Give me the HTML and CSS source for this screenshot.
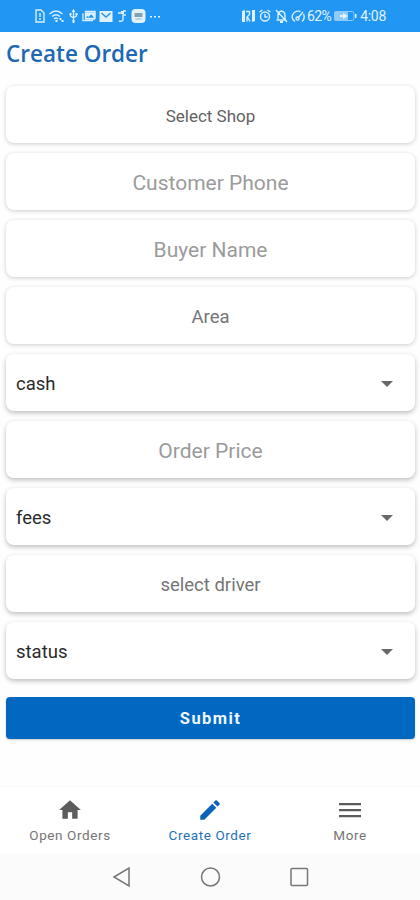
FILE: index.html
```
<!DOCTYPE html>
<html lang="en">
<head>
    <meta charset="UTF-8">
    <meta name="viewport" content="width=device-width, initial-scale=1.0">
    <title>Create Order</title>
    <link rel="stylesheet" href="styles.css">
</head>
<body>
    <div class="status-bar">
        <div class="status-left">
            <svg width="10" height="14" viewBox="0 0 10 14"><path d="M1 1h5l3 3v9H1z"/><path d="M5 4v4M5 9v2"/></svg>
            <svg width="17" height="14" viewBox="0 0 16 14"><path d="M1 5q6.500-6 13 0M3.500 7.500q4-3.500 8 0M5.500 10q2-2 4 0"/><path class="solid" d="M7 11h2v2H7zM11 9h2v2h-2zM13 11h2v2h-2z"/></svg>
            <svg width="11" height="14" viewBox="0 0 10 14"><path d="M5 2v10M2 5v2l3 2 3-2V5"/><path class="solid" d="M5 0l2 3H3zM1 4h2v2H1zM7 4h2v2H7zM4 11h2v3H4z"/></svg>
            <svg width="14" height="14" viewBox="0 0 15 14"><path d="M3 2h11v8M1 4v8h11"/><path class="solid" fill-rule="evenodd" d="M3 3h11v8H3zM4 9h9l-3-4-3 3-1-1z"/></svg>
            <svg width="14" height="14" viewBox="0 0 13 14"><path class="solid" d="M0 2h13v11H0z"/><path class="mail-fold" d="M2 4l4.500 4L11 4"/></svg>
            <svg width="12" height="14" viewBox="0 0 10 14"><path d="M1 4h4M6 2h3M6 3v8q-1 2-4 1M6 6h3"/><path class="solid" d="M4 2h3v3H4z"/></svg>
            <svg width="15" height="14" viewBox="0 0 14 14"><rect class="solid" width="14" height="14" rx="4"/><path class="app-mark" d="M3 5h8M3 7h8"/><path class="app-line" d="M4 10h6"/></svg>
            <svg width="12" height="14" viewBox="0 0 12 14"><path class="solid" d="M1 7h2v1.500H1zM5 7h2v1.500H5zM9 7h2v1.500H9z"/></svg>
        </div>
        <div class="status-right">
            <svg width="13" height="14" viewBox="0 0 13 14"><path class="solid" d="M0 2l3-1v12H0zM10 1h3v11l-3 1z"/><path d="M4 2.500h3.500v3L5 8v4.500M5.500 8L8 12.500"/></svg>
            <svg width="14" height="14" viewBox="0 0 13 14"><circle cx="6.500" cy="7.500" r="4.500"/><path d="M1 3l3-2M12 3L9 1M6.500 5v3h2.500"/></svg>
            <svg width="13" height="14" viewBox="0 0 13 14"><path d="M3 10V6q0-3 3.500-4Q10 3 10 6v4M1.500 11h10M1 1l11 12"/><path class="solid" d="M5 12h3v2H5z"/></svg>
            <svg width="15" height="14" viewBox="0 0 15 14"><path d="M4 12.500Q0 10 1.500 6 4 1 9.500 2.500M12.500 5q2 4.500-1.500 7.500M7 9l5-6"/><circle cx="6.500" cy="9.500" r="1.500"/></svg>
            <span class="battery-text">62%</span>
            <svg width="23" height="12" viewBox="0 0 23 12"><rect class="battery-fill" x="0" y="1" width="14" height="10" rx="2"/><rect class="battery-case" x="1" y="1.500" width="19" height="9" rx="2"/><path class="solid" d="M21 4h1.500v4H21zM6 5h3V3l5 3-5 3V7H6z"/></svg>
            <span class="clock">4:08</span>
        </div>
    </div>

    <h1>Create Order</h1>

    <div class="form">
        <div class="field shop">Select Shop</div>
        <div class="field input">Customer Phone</div>
        <div class="field input">Buyer Name</div>
        <div class="field picker">Area</div>
        <div class="field select deep"><span>cash</span><i class="arrow"></i></div>
        <div class="field input deep">Order Price</div>
        <div class="field select deep"><span>fees</span><i class="arrow"></i></div>
        <div class="field picker deep">select driver</div>
        <div class="field select deep"><span>status</span><i class="arrow"></i></div>
        <button class="submit">Submit</button>
    </div>

    <div class="tabs">
        <div class="tab">
            <svg width="26" height="26" viewBox="0 0 24 24"><path d="M10 20v-6h4v6h5v-8h3L12 3 2 12h3v8z"/></svg>
            <span>Open Orders</span>
        </div>
        <div class="tab active">
            <svg width="28" height="28" viewBox="0 0 24 24"><path d="M3 17.250V21h3.750L17.810 9.940l-3.750-3.750zM20.710 7.040a1 1 0 0 0 0-1.410l-2.340-2.340a1 1 0 0 0-1.410 0l-1.830 1.830 3.750 3.750z"/></svg>
            <span>Create Order</span>
        </div>
        <div class="tab">
            <svg width="22" height="26" viewBox="0 0 22 26"><path d="M0 6h22v2.300H0zM0 12h22v2.300H0zM0 18h22v2.300H0z"/></svg>
            <span>More</span>
        </div>
    </div>

    <div class="nav-bar">
        <svg width="20" height="22" viewBox="0 0 20 22"><path d="M3 11L18 2v18z"/></svg>
        <svg width="22" height="22" viewBox="0 0 22 22"><circle cx="11.500" cy="11" r="9"/></svg>
        <svg width="20" height="22" viewBox="0 0 20 22"><rect x="2" y="2.500" width="16.500" height="17" rx="1"/></svg>
    </div>
</body>
</html>
```
FILE: styles.css
```
body {
    margin: 0;
    width: 420px;
    height: 900px;
    display: flex;
    flex-direction: column;
    font-family: Roboto, sans-serif;
    background-color: #fefefe;
    overflow: hidden;
}
.status-bar {
    display: flex;
    justify-content: space-between;
    box-sizing: border-box;
    height: 32px;
    padding: 0 34px 0 35px;
    background-color: #2196f3;
    color: #e0f2ff;
    flex-shrink: 0;
}
.status-left, .status-right {
    display: flex;
    align-items: center;
    gap: 3px;
}
.status-bar svg {
    fill: none;
    stroke: #d9efff;
    stroke-width: 1.4;
}
.status-bar .solid {
    fill: #e0f2ff;
    stroke: none;
}
.status-bar .mail-fold {
    stroke: #2196f3;
}
.status-bar .app-mark {
    stroke: #6b8794;
}
.status-bar .app-line {
    stroke: #b4c8d3;
}
.status-bar .battery-fill {
    fill: #8fcbfa;
    stroke: none;
}
.status-bar .battery-case {
    stroke: #8fcbfa;
    stroke-width: 1;
}
.battery-text, .clock {
    font-size: 14px;
    line-height: 33px;
    letter-spacing: -0.3px;
}
.battery-text {
    margin-left: -2px;
    letter-spacing: -0.6px;
}
h1 {
    margin: 0;
    padding-left: 6px;
    height: 54px;
    line-height: 43px;
    font-family: "Open Sans", sans-serif;
    font-size: 22.5px;
    font-weight: 600;
    color: #1c68b5;
}
.form {
    display: flex;
    flex-direction: column;
    gap: 10px;
    padding: 0 5px 0 6px;
}
.field {
    display: flex;
    align-items: center;
    justify-content: center;
    box-sizing: border-box;
    height: 57px;
    padding-top: 2px;
    border-radius: 8px;
    background-color: #fff;
    box-shadow: 0 1px 4px rgba(0, 0, 0, 0.2);
}
.deep {
    box-shadow: 0 2px 5px rgba(0, 0, 0, 0.26);
}
.shop {
    font-size: 17px;
    color: #626262;
}
.input {
    font-size: 21px;
    color: #9b9b9b;
}
.picker {
    font-size: 18.5px;
    color: #757575;
}
.select {
    justify-content: space-between;
    padding: 2px 22px 0 10px;
    font-size: 18.5px;
    color: #2b2b2b;
}
.arrow {
    border-left: 6px solid transparent;
    border-right: 6px solid transparent;
    border-top: 6px solid #686868;
}
.submit {
    height: 42px;
    margin-top: 8px;
    padding: 1px 0 0;
    border: none;
    border-radius: 4px;
    background-color: #0168c1;
    box-shadow: 0 1px 2px rgba(0, 0, 0, 0.2);
    color: #eef6ff;
    font-family: Roboto, sans-serif;
    font-size: 16.5px;
    font-weight: bold;
    letter-spacing: 1.4px;
}
.tabs {
    display: flex;
    height: 66px;
    margin-top: auto;
    border-top: 1px solid #f8f8f8;
    background-color: #fff;
}
.tab {
    flex: 1;
    display: flex;
    flex-direction: column;
    align-items: center;
    padding-top: 10px;
    font-size: 13.5px;
    letter-spacing: 0.6px;
    color: #757575;
}
.tab svg {
    height: 26px;
    margin-bottom: 4px;
    fill: #5c5c5c;
}
.tab.active {
    color: #2571b8;
}
.tab.active svg {
    fill: #0b63bb;
}
.nav-bar {
    display: flex;
    justify-content: center;
    align-items: center;
    gap: 68px;
    height: 47px;
    background-color: #fbfbfb;
}
.nav-bar svg {
    fill: none;
    stroke: #777;
    stroke-width: 1.5;
}
```
